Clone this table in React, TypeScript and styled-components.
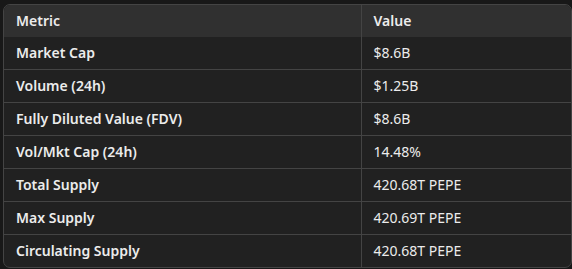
import React from 'react';
import styled, { createGlobalStyle } from 'styled-components';

const GlobalStyle = createGlobalStyle`
    html, body {
        margin: 0;
        padding: 0;
        background: #181818;
    }
    body {
        padding: 4px 0 0 3px;
        font-family: "Noto Sans", "Open Sans", sans-serif;
    }
`;

const Frame = styled.div`
    width: 567px;
    border: 1px solid #444444;
    border-radius: 7px;
    overflow: hidden;
    background: #212121;
`;

const Table = styled.table`
    width: 100%;
    border-collapse: collapse;
    table-layout: fixed;
    font-size: 14px;
    color: #ececec;
`;

const HeadRow = styled.tr`
    background: #303030;
`;

const Cell = styled.td<{ $bold?: boolean; $first?: boolean }>`
    height: 32px;
    padding: 0 12px;
    font-weight: ${props => (props.$bold ? 600 : 400)};
    border-bottom: 1px solid #444444;
    border-left: ${props => (props.$first ? 'none' : '1px solid #444444')};
    white-space: nowrap;
    vertical-align: middle;
    line-height: 20px;

    tr:last-child > & {
        border-bottom: none;
    }
`;

const HeadCell = styled(Cell).attrs({ as: 'th' })`
    text-align: left;
    font-weight: 600;
`;

interface MetricRow {
    label: string;
    value: string;
}

const rows: MetricRow[] = [
    { label: 'Market Cap', value: '$8.6B' },
    { label: 'Volume (24h)', value: '$1.25B' },
    { label: 'Fully Diluted Value (FDV)', value: '$8.6B' },
    { label: 'Vol/Mkt Cap (24h)', value: '14.48%' },
    { label: 'Total Supply', value: '420.68T PEPE' },
    { label: 'Max Supply', value: '420.69T PEPE' },
    { label: 'Circulating Supply', value: '420.68T PEPE' },
];

const App: React.FC = () => {
    return (
        <>
            <GlobalStyle />
            <Frame>
                <Table>
                    <colgroup>
                        <col style={{ width: 357 }} />
                        <col />
                    </colgroup>
                    <thead>
                        <HeadRow>
                            <HeadCell $first>Metric</HeadCell>
                            <HeadCell>Value</HeadCell>
                        </HeadRow>
                    </thead>
                    <tbody>
                        {rows.map(row => (
                            <tr key={row.label}>
                                <Cell $first $bold>{row.label}</Cell>
                                <Cell>{row.value}</Cell>
                            </tr>
                        ))}
                    </tbody>
                </Table>
            </Frame>
        </>
    );
};

export default App;
